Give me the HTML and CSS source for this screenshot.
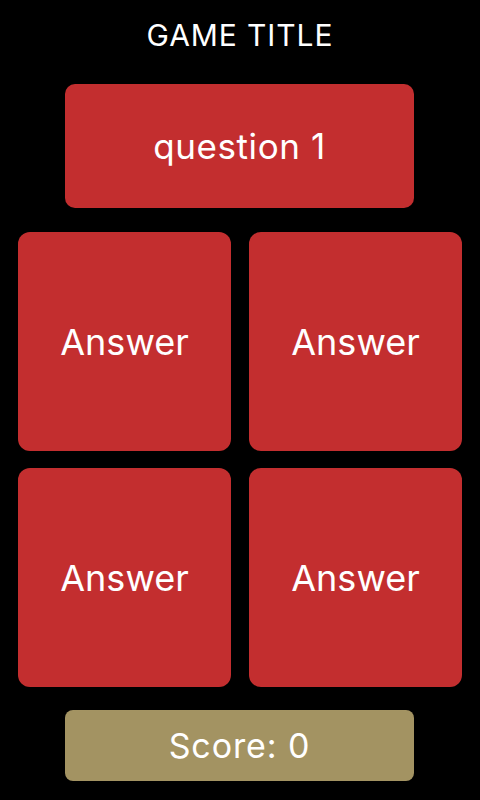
FILE: index.html
```html
<!DOCTYPE html>
<html>
<head>
<meta charset="utf-8">
<link rel="stylesheet" href="styles.css">
</head>
<body>
<div class="screen">
  <h1 class="title">GAME TITLE</h1>
  <div class="question">question 1</div>
  <div class="answers">
    <div class="answer">Answer</div>
    <div class="answer">Answer</div>
    <div class="answer">Answer</div>
    <div class="answer">Answer</div>
  </div>
  <div class="score">Score: 0</div>
</div>
</body>
</html>
```
FILE: styles.css
```css
html, body {
  margin: 0;
  padding: 0;
  background: #000;
}
.screen {
  width: 480px;
  height: 800px;
  display: flex;
  flex-direction: column;
  align-items: center;
  font-family: Inter, "Open Sans", sans-serif;
  color: #fff;
}
.title {
  margin: 0;
  height: 84px;
  display: flex;
  align-items: center;
  justify-content: center;
  font-size: 30px;
  font-weight: 400;
  letter-spacing: 0.9px;
  padding-bottom: 14px;
  box-sizing: border-box;
}
.question {
  width: 349px;
  height: 124px;
  margin-right: 1px;
  background: #c32e2f;
  border-radius: 10px;
  display: flex;
  align-items: center;
  justify-content: center;
  font-size: 35px;
  letter-spacing: 0.6px;
}
.answers {
  margin-top: 24px;
  display: grid;
  grid-template-columns: 213px 213px;
  grid-template-rows: 219px 219px;
  column-gap: 18px;
  row-gap: 17px;
}
.answer {
  background: #c32e2f;
  border-radius: 12px;
  display: flex;
  align-items: center;
  justify-content: center;
  font-size: 36px;
}
.score {
  margin-top: 23px;
  width: 349px;
  height: 71px;
  margin-right: 1px;
  background: #a39362;
  border-radius: 8px;
  display: flex;
  align-items: center;
  justify-content: center;
  font-size: 34px;
  letter-spacing: 0.9px;
}
```
